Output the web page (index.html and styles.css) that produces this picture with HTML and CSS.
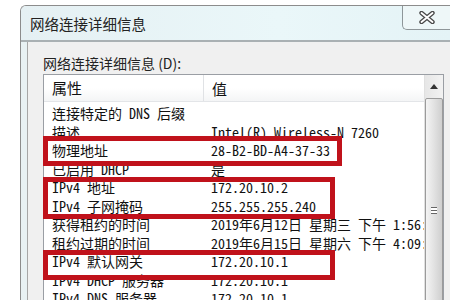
FILE: index.html
```html
<!DOCTYPE html>
<html lang="zh-CN">
<head>
    <meta charset="UTF-8">
    <title>网络连接详细信息</title>
    <link rel="stylesheet" href="styles.css">
</head>
<body>
    <div class="window">
        <div class="titlebar">
            <span class="title">网络连接详细信息</span>
            <div class="close">
                <svg width="16" height="13" viewBox="0 0 16 13">
                    <path d="M2.5 2 L13.5 11 M13.5 2 L2.5 11" stroke="#4a4a4a" stroke-width="4.4" stroke-linecap="round"/>
                    <path d="M2.5 2 L13.5 11 M13.5 2 L2.5 11" stroke="#fff" stroke-width="1.8" stroke-linecap="round"/>
                </svg>
            </div>
        </div>
        <div class="frame">
            <div class="content">
                <div class="label">网络连接详细信息 (D):</div>
                <div class="listbox">
                    <div class="table">
                        <div class="head">
                            <div class="col1">属性</div>
                            <div class="col2">值</div>
                        </div>
                        <div class="rows">
                            <div class="row"><div class="col1">连接特定的 DNS 后缀</div><div class="col2"></div></div>
                            <div class="row"><div class="col1">描述</div><div class="col2">Intel(R) Wireless-N 7260</div></div>
                            <div class="row"><div class="col1">物理地址</div><div class="col2">28-B2-BD-A4-37-33</div></div>
                            <div class="row"><div class="col1">已启用 DHCP</div><div class="col2">是</div></div>
                            <div class="row"><div class="col1">IPv4 地址</div><div class="col2">172.20.10.2</div></div>
                            <div class="row"><div class="col1">IPv4 子网掩码</div><div class="col2">255.255.255.240</div></div>
                            <div class="row"><div class="col1">获得租约的时间</div><div class="col2">2019年6月12日 星期三 下午 1:56:21</div></div>
                            <div class="row"><div class="col1">租约过期的时间</div><div class="col2">2019年6月15日 星期六 下午 4:09:02</div></div>
                            <div class="row"><div class="col1">IPv4 默认网关</div><div class="col2">172.20.10.1</div></div>
                            <div class="row"><div class="col1">IPv4 DHCP 服务器</div><div class="col2">172.20.10.1</div></div>
                            <div class="row"><div class="col1">IPv4 DNS 服务器</div><div class="col2">172.20.10.1</div></div>
                        </div>
                    </div>
                    <div class="scrollbar">
                        <div class="arrow">
                            <svg width="8" height="5" viewBox="0 0 8 5"><path d="M0 5 L4 0 L8 5 Z" fill="#333"/></svg>
                        </div>
                        <div class="thumb"><div class="grip"></div></div>
                    </div>
                    <!-- red highlight boxes drawn over the list -->
                    <div class="mark mark-mac"></div>
                    <div class="mark mark-ip"></div>
                    <div class="mark mark-gw"></div>
                </div>
            </div>
        </div>
    </div>
</body>
</html>
```

FILE: styles.css
```css
html, body {
    margin: 0;
    padding: 0;
    background: #fff;
    overflow: hidden;
}
body {
    font-family: "Noto Sans CJK SC", sans-serif;
    color: #111;
}
.window {
    margin: 5px 0 0 20px;
    height: 295px;
    border-top: 1px solid #8c8c8c;
    border-left: 1px solid #8c8c8c;
    border-top-left-radius: 6px;
    background: #e8f1f3;
    overflow: hidden;
}
.titlebar {
    position: relative;
    height: 34px;
    display: flex;
    align-items: center;
    padding-left: 9px;
    background: linear-gradient(to right, #e5f0f3, #eaf7f9 60%, #e4f3f6);
    border-bottom: 2px solid #a9b0b3;
}
.title {
    font-size: 14.5px;
    color: #222;
}
.close {
    position: absolute;
    top: 0;
    right: 0;
    width: 47px;
    height: 23px;
    border-left: 1px solid #8e9699;
    border-bottom: 1px solid #8e9699;
    border-bottom-left-radius: 5px;
    background: #eef7f8;
    display: flex;
    align-items: center;
    justify-content: center;
}
.frame {
    padding-left: 6px;
    height: 100%;
}
.content {
    height: 100%;
    border-left: 1px solid #a6a6a6;
    background: #f0f0f0;
    padding: 12px 0 0 15px;
}
.label {
    font-size: 14px;
    line-height: 18px;
    color: #222;
}
.listbox {
    position: relative;
    margin-top: 2px;
    width: 399px;
    height: 240px;
    border: 1px solid #9a9ea4;
    background: #fff;
    display: flex;
}
.table {
    flex: 1;
    overflow: hidden;
}
.head {
    display: flex;
    height: 26px;
    align-items: center;
    font-size: 15px;
    background: linear-gradient(to bottom, #fff 50%, #f4f5f6);
    border-bottom: 1px solid #e3e5e8;
}
.head .col1 {
    border-right: 1px solid #e0e2e5;
    height: 26px;
    line-height: 26px;
}
.rows {
    padding-top: 2px;
    font-family: "Noto Sans Mono CJK SC", "Noto Sans CJK SC", monospace;
    font-size: 14px;
}
.row {
    display: flex;
    height: 18.5px;
    line-height: 18.5px;
    white-space: nowrap;
}
.col1 {
    width: 151px;
    flex: none;
    padding-left: 8px;
}
.col2 {
    padding-left: 8px;
    white-space: nowrap;
}
.scrollbar {
    width: 18px;
    flex: none;
    background: linear-gradient(to right, #e6e6e6, #f2f2f2);
    border-left: 1px solid #e0e0e0;
}
.arrow {
    height: 22px;
    display: flex;
    align-items: center;
    justify-content: center;
}
.thumb {
    margin: 1px 0 0 0;
    height: 230px;
    border: 1px solid #9b9b9b;
    border-radius: 2px;
    background: linear-gradient(to right, #f4f4f4, #e2e2e2 50%, #cfcfcf);
    display: flex;
    justify-content: center;
    padding-top: 108px;
    box-sizing: border-box;
}
.grip {
    width: 6px;
    height: 7px;
    border-top: 1px solid #666;
    border-bottom: 1px solid #666;
    background: linear-gradient(#fff 0 2px, #666 2px 3px, #fff 3px);
    box-sizing: border-box;
}
.mark {
    position: absolute;
    left: -1px;
    border: 5px solid #c0121b;
}
.mark-mac {
    top: 61px;
    width: 289px;
    height: 20px;
}
.mark-ip {
    top: 102px;
    width: 282px;
    height: 32px;
}
.mark-gw {
    top: 175px;
    width: 282px;
    height: 20px;
}
```
